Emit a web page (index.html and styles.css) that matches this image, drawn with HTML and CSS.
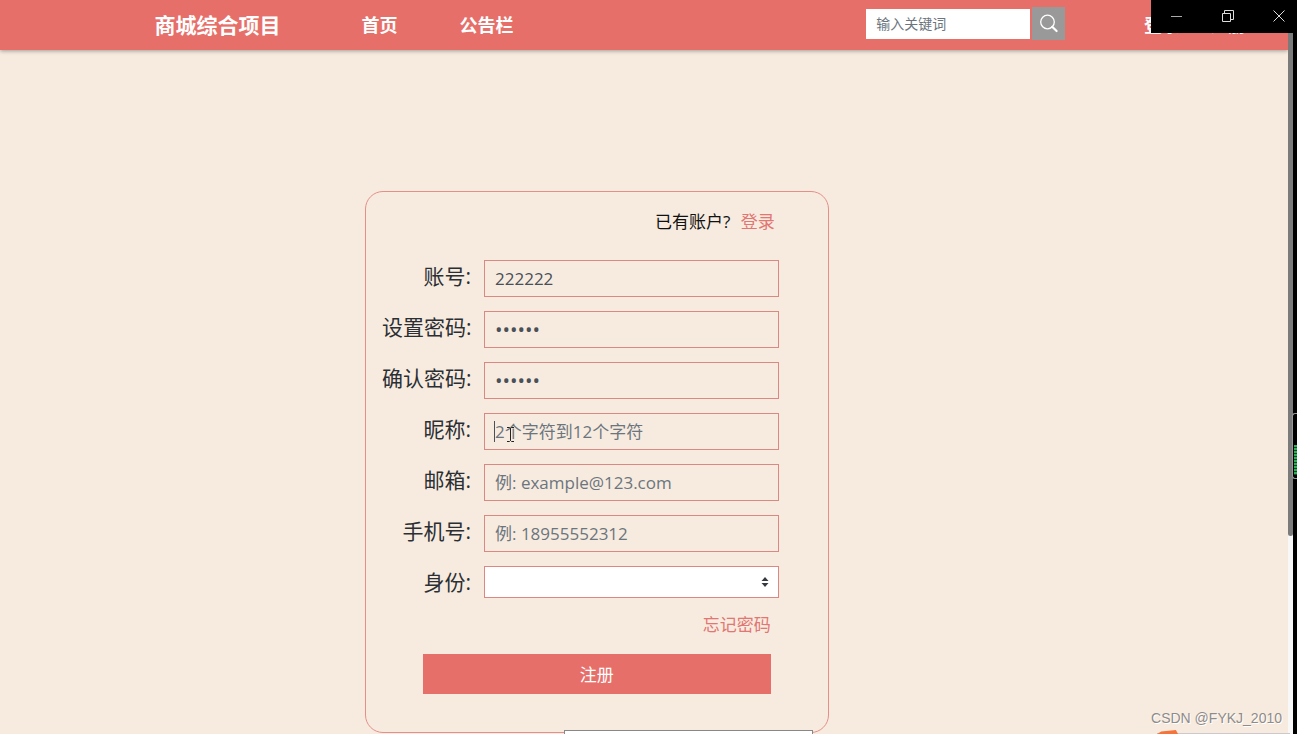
FILE: index.html
```html
<!DOCTYPE html>
<html lang="zh-CN">
<head>
  <meta charset="UTF-8">
  <title>商城综合项目 - 注册</title>
  <link rel="stylesheet" href="styles.css">
</head>
<body>
<div class="page">
  <header class="header">
    <a class="brand" href="#">商城综合项目</a>
    <nav class="nav">
      <a href="#">首页</a>
      <a href="#">公告栏</a>
    </nav>
    <form class="search">
      <input type="text" placeholder="输入关键词" aria-label="输入关键词">
      <button type="button" aria-label="搜索">
        <svg width="20" height="20" viewBox="0 0 20 20" fill="none" stroke="#fff">
          <circle cx="8.5" cy="8" r="6.8" stroke-width="1.3"/>
          <path d="M13.2 12.8L17.6 17" stroke-width="2.2" stroke-linecap="round"/>
        </svg>
      </button>
    </form>
    <div class="user">
      <a href="#">登录</a>
      <a href="#">注册</a>
    </div>
  </header>

  <main>
    <form class="card">
      <p class="login">已有账户? <a href="#">登录</a></p>
      <div class="row">
        <label for="account">账号:</label>
        <div class="field"><input id="account" type="text" value="222222"></div>
      </div>
      <div class="row">
        <label for="password">设置密码:</label>
        <div class="field"><input id="password" type="password" value="222222"></div>
      </div>
      <div class="row">
        <label for="confirm">确认密码:</label>
        <div class="field"><input id="confirm" type="password" value="222222"></div>
      </div>
      <div class="row">
        <label for="nickname">昵称:</label>
        <div class="field">
          <input id="nickname" type="text" placeholder="2个字符到12个字符">
          <span class="caret"></span>
          <svg class="pointer" width="9" height="15" viewBox="0 0 9 15" fill="none" stroke="#222">
            <path d="M1 .5H3.5L4.5 1.5L5.5 .5H8M4.5 1.5V13.5M1 14.5H3.5L4.5 13.5L5.5 14.5H8"/>
          </svg>
        </div>
      </div>
      <div class="row">
        <label for="email">邮箱:</label>
        <div class="field"><input id="email" type="text" placeholder="例: example@123.com"></div>
      </div>
      <div class="row">
        <label for="phone">手机号:</label>
        <div class="field"><input id="phone" type="text" placeholder="例: 18955552312"></div>
      </div>
      <div class="row">
        <label for="role">身份:</label>
        <div class="field">
          <select id="role"><option></option></select>
          <svg class="arrows" width="8" height="10" viewBox="0 0 8 10" fill="#343a40">
            <path d="M4 0L7.5 4H.5ZM4 10L.5 6H7.5Z"/>
          </svg>
        </div>
      </div>
      <a class="forgot" href="#">忘记密码</a>
      <button class="submit" type="button">注册</button>
    </form>
  </main>
</div>

<div class="scrollbar"><div class="thumb"></div></div>

<div class="window-controls">
  <button type="button" aria-label="最小化">
    <svg width="12" height="12" viewBox="0 0 12 12" fill="none" stroke="#aaa"><path d="M0 6.5H11"/></svg>
  </button>
  <button type="button" aria-label="还原">
    <svg width="12" height="12" viewBox="0 0 12 12" fill="none" stroke="#ddd"><path d="M.5 3.5H8.5V11.5H.5ZM2.5 3V.5H11.5V9.5H9"/></svg>
  </button>
  <button type="button" aria-label="关闭">
    <svg width="12" height="12" viewBox="0 0 12 12" fill="none" stroke="#ddd"><path d="M.5 .5L11.5 11.5M11.5 .5L.5 11.5"/></svg>
  </button>
</div>

<div class="meter"><div class="level"></div></div>
<div class="popup"></div>
<div class="dock"></div>
<div class="watermark">CSDN @FYKJ_2010</div>
</body>
</html>
```
FILE: styles.css
```css
html, body {
  margin: 0;
  padding: 0;
  height: 100%;
}

* {
  box-sizing: border-box;
}

body {
  display: flex;
  position: relative;
  overflow: hidden;
  background: #f7ebe0;
  font: 17px "Open Sans", "Noto Sans CJK SC", sans-serif;
  color: #2b2f33;
}

a {
  color: #e27672;
  text-decoration: none;
}

input, select, button {
  font: inherit;
  border-radius: 0;
  margin: 0;
}

.page {
  flex: 1;
}

/* top bar */

.header {
  display: grid;
  grid-template-columns: 207fr 505fr 278fr 144fr;
  align-items: center;
  height: 50px;
  padding: 0 0 3px 12%;
  background: #e76f69;
  box-shadow: 0 1px 4px rgba(0, 0, 0, .35);
}

.header a {
  color: #fff;
  font-size: 18px;
  font-weight: bold;
  white-space: nowrap;
}

.header .brand {
  font-size: 21px;
}

.nav {
  display: flex;
  gap: 62px;
}

.user {
  display: flex;
  gap: 30px;
}

.search {
  display: flex;
  align-items: center;
  gap: 2px;
}

.search input {
  width: 164px;
  height: 30px;
  padding: 0 10px;
  border: 0;
  background: #fff;
  font-size: 14px;
}

.search button {
  display: flex;
  align-items: center;
  justify-content: center;
  width: 33px;
  height: 33px;
  padding: 0;
  border: 0;
  background: #999;
}

/* register form */

.card {
  display: flex;
  flex-direction: column;
  width: 36%;
  min-width: 440px;
  margin: 141px 0 0 365px;
  padding: 17px 49px 38px 16px;
  border: 1px solid #e58e8a;
  border-radius: 18px;
}

.login {
  margin: 0 4px 26px 0;
  line-height: 25px;
  text-align: right;
  color: #111;
}

.login a {
  margin-left: 6px;
}

.row {
  display: flex;
  align-items: flex-start;
  gap: 13px;
  margin-bottom: 14px;
}

.row label {
  width: 89px;
  font-size: 21px;
  line-height: 32px;
  text-align: right;
  white-space: nowrap;
}

.field {
  position: relative;
  flex: 1;
}

.field input, .field select {
  display: block;
  width: 100%;
  height: 37px;
  padding: 0 10px;
  border: 1px solid #db8783;
  background: transparent;
  color: #495057;
}

.field input[type="password"] {
  font-size: 20px;
}

.field select {
  height: 32px;
  background: #fff;
  appearance: none;
}

input::placeholder {
  color: #6c757d;
}

.caret {
  position: absolute;
  left: 10px;
  top: 8px;
  width: 1px;
  height: 21px;
  background: #495057;
}

.pointer {
  position: absolute;
  left: 22px;
  top: 14px;
}

.arrows {
  position: absolute;
  right: 10px;
  top: 11px;
}

.forgot {
  align-self: flex-end;
  margin: 0 8px 16px 0;
  line-height: 26px;
}

.submit {
  height: 40px;
  margin: 0 8px 0 41px;
  padding: 0 0 2px;
  border: 0;
  background: #e76f69;
  color: #fff;
}

/* desktop around the page */

.scrollbar {
  width: 9px;
  border-right: 4px solid #000;
  background: #f8f8f8;
}

.thumb {
  height: 73%;
  border-radius: 0 0 3px 3px;
  background: #7b7b7b;
}

.window-controls {
  position: absolute;
  top: 0;
  right: 0;
  display: flex;
  width: 146px;
  height: 33px;
  padding-bottom: 1px;
  background: #000;
}

.window-controls button {
  display: flex;
  width: 51px;
  flex: none;
  align-items: center;
  justify-content: center;
  padding: 0;
  border: 0;
  background: none;
}

.meter {
  position: absolute;
  top: 413px;
  right: 0;
  width: 5px;
  height: 66px;
  padding: 31px 0 0 1px;
  border: 1px solid #999;
  border-right: 0;
  border-radius: 3px 0 0 3px;
  background: #000;
}

.level {
  height: 30px;
  background: repeating-linear-gradient(#2fae55 0 2px, #0c4a20 2px 3px);
}

.popup {
  position: absolute;
  left: 564px;
  bottom: 0;
  width: 249px;
  height: 4px;
  border: 1px solid #888;
  border-bottom: 0;
  background: #fff;
}

.dock {
  position: absolute;
  right: 7px;
  bottom: 0;
  width: 133px;
  height: 4px;
  border-bottom: 1px solid #ccc8cc;
}

.dock::before {
  content: "";
  display: block;
  width: 21px;
  height: 4px;
  background: #f5743c;
  clip-path: polygon(0 100%, 20% 40%, 90% 0, 100% 100%);
}

.watermark {
  position: absolute;
  right: 15px;
  bottom: 6px;
  font: 14px/20px "Liberation Sans", sans-serif;
  color: #8f8b88;
  text-shadow: 1px 1px 0 #fff;
}
```
